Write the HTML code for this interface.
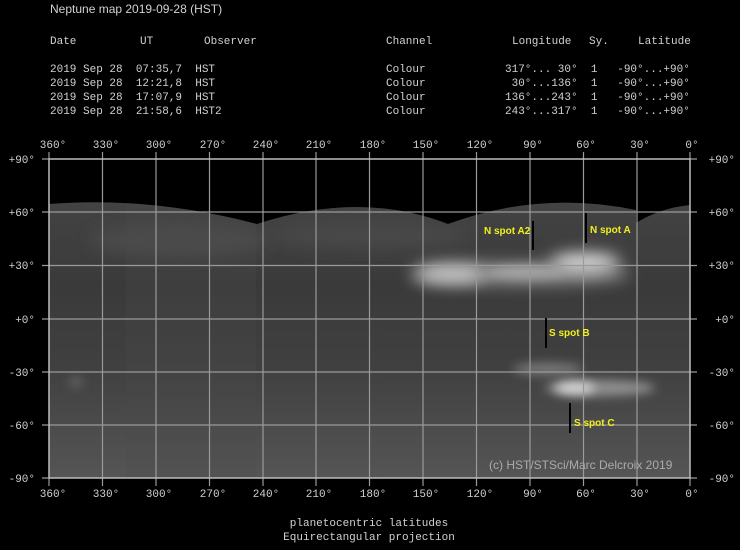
<!DOCTYPE html>
<html><head><meta charset="utf-8"><style>
html,body{margin:0;padding:0;background:#000;width:740px;height:550px;overflow:hidden}
svg{display:block}
.m text,text.m{font-family:"Liberation Mono","DejaVu Sans Mono",monospace;font-size:11px;fill:#cfd2d4;white-space:pre}
.s{font-family:"Liberation Sans",sans-serif;}
.y{font-family:"Liberation Sans",sans-serif;font-size:10px;font-weight:bold;fill:#f0f020}
</style></head><body>
<svg width="740" height="550" viewBox="0 0 740 550" xmlns="http://www.w3.org/2000/svg">
<defs>
<linearGradient id="bg" x1="0" y1="0" x2="0" y2="1">
<stop offset="0" stop-color="#434343"/><stop offset="0.3" stop-color="#3a3a3a"/><stop offset="0.6" stop-color="#404040"/><stop offset="1" stop-color="#555"/>
</linearGradient>
<filter id="b6" x="-100%" y="-300%" width="300%" height="700%"><feGaussianBlur stdDeviation="8"/></filter>
<filter id="b3" x="-100%" y="-300%" width="300%" height="700%"><feGaussianBlur stdDeviation="5"/></filter>
<clipPath id="mc"><path d="M49 204 Q150 196 257 224 Q360 190 448 224 Q540 190 636 210 L636 223 Q660 208 690 205 L690 478 L49 478 Z"/></clipPath>
</defs>
<path d="M49 204 Q150 196 257 224 Q360 190 448 224 Q540 190 636 210 L636 223 Q660 208 690 205 L690 478 L49 478 Z" fill="url(#bg)"/>
<g clip-path="url(#mc)">
<rect x="126" y="200" width="130" height="278" fill="#4a4a4a" opacity="0.25"/>
<ellipse cx="180" cy="240" rx="90" ry="16" fill="#4c4c4c" filter="url(#b6)"/>
<ellipse cx="370" cy="235" rx="100" ry="12" fill="#4a4a4a" filter="url(#b6)"/>
<ellipse cx="520" cy="274" rx="110" ry="11" fill="#8a8a8a" filter="url(#b6)"/>
<ellipse cx="450" cy="274" rx="35" ry="9" fill="#c8c8c8" filter="url(#b6)"/>
<ellipse cx="585" cy="262" rx="35" ry="9" fill="#e0e0e0" filter="url(#b6)"/>
<ellipse cx="525" cy="272" rx="40" ry="6" fill="#a8a8a8" filter="url(#b3)"/>
<ellipse cx="548" cy="369" rx="35" ry="6" fill="#7a7a7a" filter="url(#b3)"/>
<ellipse cx="600" cy="388" rx="55" ry="8" fill="#909090" filter="url(#b3)"/>
<ellipse cx="575" cy="388" rx="20" ry="6" fill="#d8d8d8" filter="url(#b3)"/>
<ellipse cx="76" cy="382" rx="7" ry="5" fill="#666" filter="url(#b3)"/>
</g>
<g stroke="#9a9a9a" stroke-width="1.2" fill="none">
<path d="M102.5 152V478M156 152V478M209.5 152V478M263 152V478M316 152V478M369.5 152V478M423 152V478M476.5 152V478M530 152V478M583.5 152V478M637 152V478"/>
<path d="M102.5 478v8M156 478v8M209.5 478v8M263 478v8M316 478v8M369.5 478v8M423 478v8M476.5 478v8M530 478v8M583.5 478v8M637 478v8M49 478v8M690 478v8M49 152v7M690 152v7"/>
<path d="M42 212H697M42 265.5H697M42 319H697M42 372H697M42 425H697"/>
<path d="M42 159H49M690 159H697M42 478H49M690 478H697"/>
</g>
<rect x="49" y="159" width="641" height="319" fill="none" stroke="#bdbdbd" stroke-width="1.5"/>
<g stroke="#000" stroke-width="2">
<path d="M533 221V250M586 213V243M546 318V348M570 403V433"/>
</g>
<text class="y" x="484" y="234">N spot A2</text>
<text class="y" x="590" y="233">N spot A</text>
<text class="y" x="549" y="336">S spot B</text>
<text class="y" x="574" y="426">S spot C</text>
<text class="s" x="489" y="469" font-size="12" fill="#a8acac">(c) HST/STSci/Marc Delcroix 2019</text>
<text class="s" x="50" y="13" font-size="12" fill="#cfd2d4">Neptune map 2019-09-28 (HST)</text>
<g class="m">
<text x="50" y="44">Date</text><text x="140" y="44">UT</text><text x="204" y="44">Observer</text><text x="386" y="44">Channel</text><text x="512" y="44">Longitude</text><text x="589" y="44">Sy.</text><text x="638" y="44">Latitude</text>
<text x="50" y="72">2019 Sep 28  07:35,7  HST</text>
<text x="50" y="86">2019 Sep 28  12:21,8  HST</text>
<text x="50" y="100">2019 Sep 28  17:07,9  HST</text>
<text x="50" y="114">2019 Sep 28  21:58,6  HST2</text>
<text x="386" y="72">Colour</text><text x="386" y="86">Colour</text><text x="386" y="100">Colour</text><text x="386" y="114">Colour</text>
<text x="505" y="72">317°... 30°  1   -90°...+90°</text>
<text x="505" y="86"> 30°...136°  1   -90°...+90°</text>
<text x="505" y="100">136°...243°  1   -90°...+90°</text>
<text x="505" y="114">243°...317°  1   -90°...+90°</text>
</g>
<g class="m" text-anchor="middle">
<text x="53" y="148">360°</text><text x="106" y="148">330°</text><text x="159" y="148">300°</text><text x="213" y="148">270°</text><text x="266" y="148">240°</text><text x="319" y="148">210°</text><text x="373" y="148">180°</text><text x="426" y="148">150°</text><text x="480" y="148">120°</text><text x="533" y="148">90°</text><text x="586" y="148">60°</text><text x="640" y="148">30°</text><text x="692" y="148">0°</text>
<text x="53" y="497">360°</text><text x="106" y="497">330°</text><text x="159" y="497">300°</text><text x="213" y="497">270°</text><text x="266" y="497">240°</text><text x="319" y="497">210°</text><text x="373" y="497">180°</text><text x="426" y="497">150°</text><text x="480" y="497">120°</text><text x="533" y="497">90°</text><text x="586" y="497">60°</text><text x="640" y="497">30°</text><text x="692" y="497">0°</text>
</g>
<g class="m" text-anchor="end">
<text x="35" y="163">+90°</text><text x="35" y="216">+60°</text><text x="35" y="269">+30°</text><text x="35" y="323">+0°</text><text x="35" y="376">-30°</text><text x="35" y="429">-60°</text><text x="35" y="482">-90°</text>
<text x="735" y="163">+90°</text><text x="735" y="216">+60°</text><text x="735" y="269">+30°</text><text x="735" y="323">+0°</text><text x="735" y="376">-30°</text><text x="735" y="429">-60°</text><text x="735" y="482">-90°</text>
</g>
<g class="m" text-anchor="middle">
<text x="369" y="526">planetocentric latitudes</text>
<text x="369" y="540">Equirectangular projection</text>
</g>
</svg>
</body></html>
